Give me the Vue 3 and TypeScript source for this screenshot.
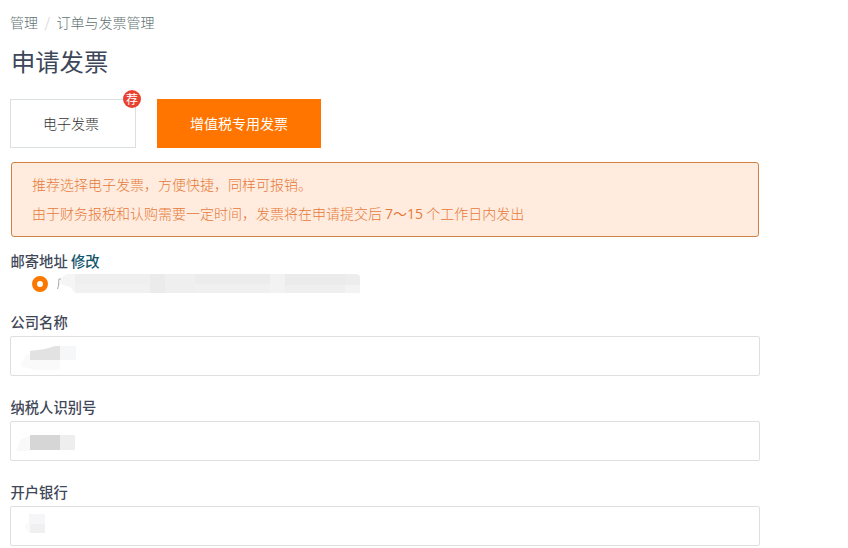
<script setup lang="ts">
import { ref } from 'vue'

interface Block {
  x: number
  y: number
  w: number
  h: number
  fill: string
}

interface Field {
  id: string
  label: string
  edge: string
  edgeFill: string
  blocks: Block[]
}

const selected = ref('special')

const addressBlocks: Block[] = [
  { x: 19, y: 1, w: 75, h: 10, fill: '#efefef' },
  { x: 19, y: 11, w: 75, h: 9, fill: '#f1f1f2' },
  { x: 94, y: 1, w: 15, h: 19, fill: '#ebebeb' },
  { x: 109, y: 1, w: 30, h: 19, fill: '#efefef' },
  { x: 139, y: 1, w: 75, h: 10, fill: '#ececec' },
  { x: 139, y: 11, w: 75, h: 9, fill: '#f0f0f0' },
  { x: 214, y: 1, w: 15, h: 19, fill: '#f2f2f2' },
  { x: 229, y: 1, w: 60, h: 11, fill: '#ebebeb' },
  { x: 229, y: 12, w: 60, h: 8, fill: '#efefef' },
  { x: 289, y: 1, w: 15, h: 11, fill: '#ededed' },
  { x: 289, y: 12, w: 15, h: 8, fill: '#f3f3f3' },
]

const fields: Field[] = [
  {
    id: 'company',
    label: '公司名称',
    edge: 'M10 27 L14 19 L19 17 V29 H49 V33 H24 L10 29Z',
    edgeFill: '#fafafa',
    blocks: [
      { x: 19, y: 23, w: 30, h: 6, fill: '#fafafa' },
      { x: 49, y: 9, w: 16, h: 14, fill: '#f6f7f8' },
    ],
  },
  {
    id: 'tax',
    label: '纳税人识别号',
    edge: 'M5 29 L10 17 L19 14 V29Z',
    edgeFill: '#f9f9f9',
    blocks: [
      { x: 19, y: 13, w: 30, h: 15, fill: '#d6d6d6' },
      { x: 49, y: 13, w: 15, h: 15, fill: '#eeeeee' },
    ],
  },
  {
    id: 'bank',
    label: '开户银行',
    edge: 'M14 19 L19 13 L19 26 L14 22Z',
    edgeFill: '#fafafa',
    blocks: [
      { x: 18, y: 7, w: 16, h: 10, fill: '#f6f6f8' },
      { x: 19, y: 17, w: 15, h: 9, fill: '#f0f0f1' },
    ],
  },
]
</script>

<template>
  <main class="page">
    <nav class="breadcrumb">
      <span>管理</span><span class="slash">/</span><span>订单与发票管理</span>
    </nav>
    <h1 class="title">申请发票</h1>

    <div class="tabs">
      <button class="tab" :class="{ active: selected === 'electronic' }" @click="selected = 'electronic'">
        电子发票<span class="badge">荐</span>
      </button>
      <button class="tab" :class="{ active: selected === 'special' }" @click="selected = 'special'">增值税专用发票</button>
    </div>

    <section class="notice">
      <p>推荐选择电子发票，方便快捷，同样可报销。</p>
      <p>由于财务报税和认购需要一定时间，发票将在申请提交后 <span class="days">7～15</span> 个工作日内发出</p>
    </section>

    <div class="label address-label">邮寄地址 <a class="edit">修改</a></div>
    <div class="address">
      <span class="radio"></span>
      <svg class="mask" width="308" height="22" viewBox="0 0 308 22">
        <path d="M1.500 16 C3 13 2.500 9 3 6 H5" fill="none" stroke="#a5a5a5" stroke-width="1" />
        <path d="M4 11 L6 4 L11 1 H19 V20 L14 14Z" fill="#f5f5f5" />
        <rect v-for="(b, i) in addressBlocks" :key="i" :x="b.x" :y="b.y" :width="b.w" :height="b.h" :fill="b.fill" />
        <path d="M300 0 H305 V4Z" fill="#fff" />
      </svg>
    </div>

    <div v-for="field in fields" :key="field.id" class="field">
      <div class="label">{{ field.label }}</div>
      <div class="input">
        <svg width="80" height="38" viewBox="0 0 80 38">
          <path :d="field.edge" :fill="field.edgeFill" />
          <path v-if="field.id === 'company'" d="M19 14 L34 12 L44 9 H49 V23 H19Z" fill="#e2e2e2" />
          <rect v-for="(b, i) in field.blocks" :key="i" :x="b.x" :y="b.y" :width="b.w" :height="b.h" :fill="b.fill" />
        </svg>
      </div>
    </div>
  </main>
</template>

<style>
body {
  background: #fff;
  overflow: hidden;
}
</style>

<style scoped>
.page {
  box-sizing: border-box;
  width: 848px;
  height: 548px;
  padding: 12px 0 0 10px;
  overflow: hidden;
  font-family: "Noto Sans CJK SC", sans-serif;
  font-size: 14px;
  font-weight: 300;
  line-height: 20px;
  color: #333;
}
.breadcrumb {
  display: flex;
  height: 20px;
  color: #5f7273;
}
.slash {
  width: 18.5px;
  text-align: center;
  color: #ccc;
}
.title {
  margin: 11px 0 0 1px;
  height: 36px;
  font-size: 24.3px;
  line-height: 36px;
  font-weight: 400;
  color: #3d4759;
}
.tabs {
  display: flex;
  gap: 21px;
  margin-top: 20px;
}
.tab {
  box-sizing: border-box;
  position: relative;
  width: 126px;
  height: 49px;
  padding: 0 4px 2px 0;
  border: 1px solid #dadfe1;
  background: #fff;
  font: inherit;
  color: #333;
}
.tab.active {
  width: 164px;
  padding: 0 0 2px;
  border-color: #ff7500;
  background: #ff7500;
  color: #fff;
  font-weight: 400;
}
.badge {
  position: absolute;
  top: -10px;
  right: -6px;
  width: 18px;
  height: 18px;
  border-radius: 50%;
  background: #e84132;
  color: #fff;
  font-size: 12px;
  font-weight: 400;
  line-height: 18px;
  text-align: center;
}
.notice {
  box-sizing: border-box;
  width: 748px;
  height: 75px;
  margin: 14px 0 0 1px;
  padding: 7px 20px;
  border: 1px solid #ce8142;
  border-radius: 3px;
  background: #ffecde;
  color: #e6793a;
}
.notice p {
  margin: 0;
  height: 29px;
  line-height: 29px;
}
.days {
  font-family: "Open Sans", "Noto Sans CJK SC", sans-serif;
  font-weight: 400;
}
.label {
  height: 20px;
  padding-left: 0.5px;
  font-size: 14.3px;
  font-weight: 500;
  color: #3f4858;
}
.address-label {
  margin-top: 14px;
}
.edit {
  color: #11566c;
}
.address {
  display: flex;
  align-items: flex-start;
  height: 22px;
  margin-top: 2px;
  padding-left: 22px;
}
.radio {
  box-sizing: border-box;
  width: 16px;
  height: 16px;
  margin-top: 3px;
  border: 5px solid #fa7800;
  border-radius: 50%;
  background: #fff;
}
.mask {
  display: block;
  margin-left: 8px;
}
.field {
  height: 85px;
}
.address + .field {
  margin-top: 17px;
}
.input {
  box-sizing: border-box;
  width: 750px;
  height: 40px;
  margin-top: 4px;
  border: 1px solid #dedfe1;
  border-radius: 2px;
}
.input svg {
  display: block;
}
</style>
